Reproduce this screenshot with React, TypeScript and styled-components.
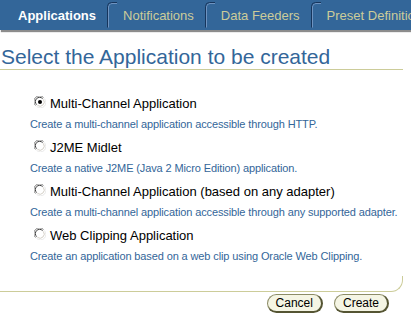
import React, { useState } from 'react';
import styled, { createGlobalStyle } from 'styled-components';

const GlobalStyle = createGlobalStyle`
  html, body {
    margin: 0;
    padding: 0;
    background: #ffffff;
    font-family: 'Liberation Sans', Arial, sans-serif;
  }
`;

const tabs = ['Notifications', 'Data Feeders', 'Preset Definitions'];

const options = [
  {
    label: 'Multi-Channel Application',
    desc: 'Create a multi-channel application accessible through HTTP.',
  },
  {
    label: 'J2ME Midlet',
    desc: 'Create a native J2ME (Java 2 Micro Edition) application.',
  },
  {
    label: 'Multi-Channel Application (based on any adapter)',
    desc: 'Create a multi-channel application accessible through any supported adapter.',
  },
  {
    label: 'Web Clipping Application',
    desc: 'Create an application based on a web clip using Oracle Web Clipping.',
  },
];

const Divider = () => (
  <DividerSvg width="17" height="30" viewBox="0 0 17 30">
    <path d="M2.5 27.5 L2.5 7 Q2.5 3.5 6 3.5 L11 3.5" fill="none" stroke="#6f93c0" strokeWidth="1" />
    <path d="M1.5 27.5 L1.5 6.5 Q1.5 2.5 5.5 2.5 L11 2.5" fill="none" stroke="#16355c" strokeWidth="1" />
  </DividerSvg>
);

const Radio: React.FC<{ checked: boolean }> = ({ checked }) => (
  <RadioSvg width="12" height="12" viewBox="0 0 12 12">
    <circle cx="6" cy="6" r="5" fill="#ffffff" />
    <path d="M1.5 9.5 A5.5 5.5 0 0 1 9.5 1.5" fill="none" stroke="#808080" strokeWidth="1" />
    <path d="M2.6 8.6 A4.2 4.2 0 0 1 8.6 2.6" fill="none" stroke="#404040" strokeWidth="1" />
    <path d="M10.3 2.5 A5.5 5.5 0 0 1 2.5 10.3" fill="none" stroke="#e8e8e8" strokeWidth="1" />
    <path d="M9.3 3.4 A4.2 4.2 0 0 1 3.4 9.3" fill="none" stroke="#d4d0c8" strokeWidth="1" />
    {checked && <circle cx="6" cy="6" r="2" fill="#000000" />}
  </RadioSvg>
);

export default function App() {
  const [selected, setSelected] = useState(0);

  return (
    <>
      <GlobalStyle />
      <Page>
        <TabBar>
          <Tab active>Applications</Tab>
          {tabs.map((t) => (
            <React.Fragment key={t}>
              <Divider />
              <Tab>{t}</Tab>
            </React.Fragment>
          ))}
        </TabBar>

        <Heading>Select the Application to be created</Heading>

        <Options>
          {options.map((o, i) => (
            <Option key={o.label}>
              <LabelRow onClick={() => setSelected(i)}>
                <Radio checked={selected === i} />
                <Label>{o.label}</Label>
              </LabelRow>
              <Desc>{o.desc}</Desc>
            </Option>
          ))}
        </Options>

        <Corner />

        <Buttons>
          <Button>Cancel</Button>
          <Button>Create</Button>
        </Buttons>
      </Page>
    </>
  );
}

const Page = styled.div`
  width: 411px;
  height: 321px;
  overflow: hidden;
`;

const TabBar = styled.div`
  height: 30px;
  background: #336699;
  display: flex;
  align-items: center;
  padding-left: 18px;
  box-shadow: 1px 2px 1px #8c8c8c;
  white-space: nowrap;
  overflow: hidden;
`;

const Tab = styled.div<{ active?: boolean }>`
  font-size: 13px;
  font-weight: ${(p) => (p.active ? 700 : 400)};
  color: ${(p) => (p.active ? '#ffffff' : '#cccc99')};
  padding-right: 10px;
  flex-shrink: 0;
`;

const DividerSvg = styled.svg`
  display: block;
  flex-shrink: 0;
`;

const Heading = styled.h1`
  margin: 15px 0 0 0;
  width: 402px;
  padding-left: 1px;
  font-size: 21px;
  font-weight: 400;
  line-height: 24px;
  color: #336699;
  border-bottom: 1px solid #cccc99;
`;

const Options = styled.div`
  display: flex;
  flex-direction: column;
  gap: 7px;
  margin-top: 24px;
  padding-left: 30px;
`;

const Option = styled.div`
  display: flex;
  flex-direction: column;
`;

const LabelRow = styled.label`
  display: flex;
  align-items: center;
  gap: 4px;
  height: 18px;
  padding-left: 4px;
  cursor: pointer;
`;

const RadioSvg = styled.svg`
  display: block;
  margin-top: -3px;
`;

const Label = styled.span`
  font-size: 13px;
  color: #000000;
`;

const Desc = styled.div`
  margin-top: 5px;
  font-size: 11px;
  line-height: 14px;
  letter-spacing: -0.12px;
  color: #336699;
  white-space: nowrap;
`;

const Corner = styled.div`
  margin-top: 13px;
  width: 402px;
  height: 15px;
  border-right: 1px solid #cccc99;
  border-bottom: 1px solid #cccc99;
  border-bottom-right-radius: 12px;
`;

const Buttons = styled.div`
  display: flex;
  justify-content: flex-end;
  gap: 11px;
  margin-top: 2px;
  padding-right: 22px;
`;

const Button = styled.button`
  height: 19px;
  padding: 0 8px;
  font-family: 'Liberation Sans', Arial, sans-serif;
  font-size: 12px;
  color: #000000;
  background: #f5f5e4;
  border-top: 1px solid #8c8c66;
  border-left: 1px solid #8c8c66;
  border-right: 2px solid #555533;
  border-bottom: 2px solid #555533;
  border-radius: 10px;
  line-height: 14px;
  cursor: pointer;
`;
